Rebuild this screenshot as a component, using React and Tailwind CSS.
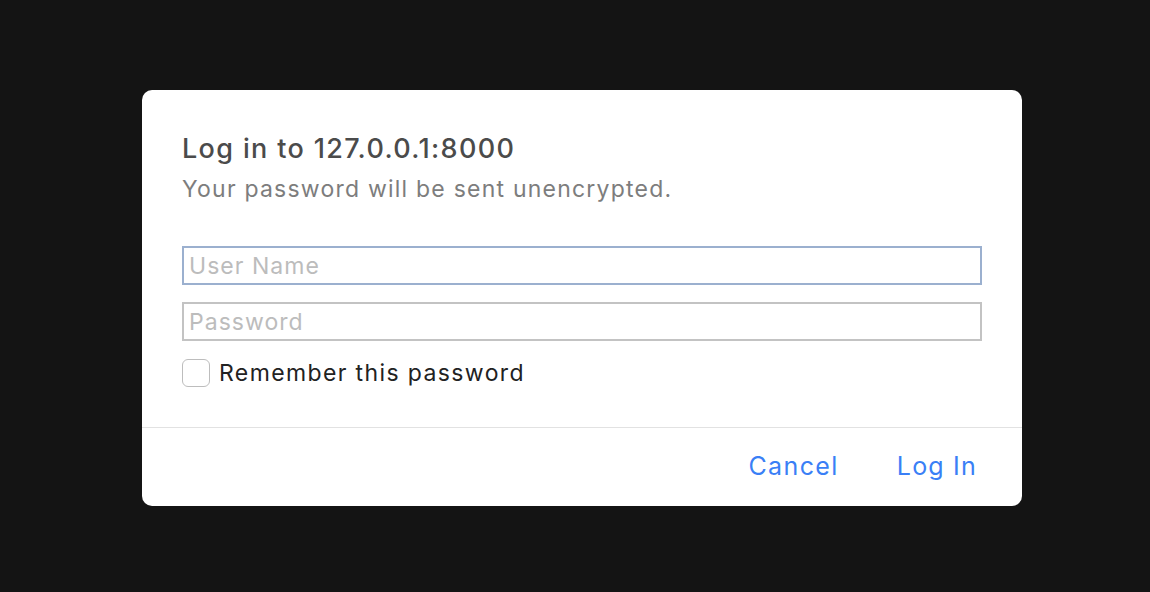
import React from 'react';

const App = () => {
  return (
    <div className="w-[1150px] h-[592px] bg-[#141414] flex items-start pl-[142px] pt-[90px]" style={{ fontFamily: 'Inter, "Liberation Sans", sans-serif' }}>
      <div className="w-[880px] h-[416px] bg-white rounded-[10px] flex flex-col">
        <div className="px-10 pt-[43px] flex-1">
          <h1 className="text-[27px] leading-[32px] font-medium tracking-[0.05em] text-[#4b4b4b]">Log in to 127.0.0.1:8000</h1>
          <p className="text-[23px] leading-[28px] tracking-[0.053em] text-[#7d7d7d] mt-[10px]">Your password will be sent unencrypted.</p>
          <div className="mt-[43px] flex flex-col gap-[17px]">
            <input
              type="text"
              placeholder="User Name"
              className="w-[800px] h-[39px] border-2 border-[#9bb0cf] px-[5px] text-[23px] tracking-[0.045em] text-[#222] placeholder-[#bcbcbc] outline-none"
            />
            <input
              type="password"
              placeholder="Password"
              className="w-[800px] h-[39px] border-2 border-[#c3c3c3] px-[5px] text-[23px] tracking-[0.045em] text-[#222] placeholder-[#bcbcbc] outline-none"
            />
          </div>
          <label className="mt-[18px] flex items-center gap-[9px]">
            <span className="w-[28px] h-[28px] rounded-[6px] border border-[#bdbdbd] bg-white"></span>
            <span className="text-[23px] leading-[28px] tracking-[0.06em] text-[#222]">Remember this password</span>
          </label>
        </div>
        <div className="border-t border-[#e2e2e2] h-[79px] flex items-center justify-end pr-[45px] gap-[58px]">
          <button className="text-[25px] tracking-[0.056em] text-[#3a7ff6]">Cancel</button>
          <button className="text-[25px] tracking-[0.048em] text-[#3a7ff6]">Log In</button>
        </div>
      </div>
    </div>
  );
};

export default App;
